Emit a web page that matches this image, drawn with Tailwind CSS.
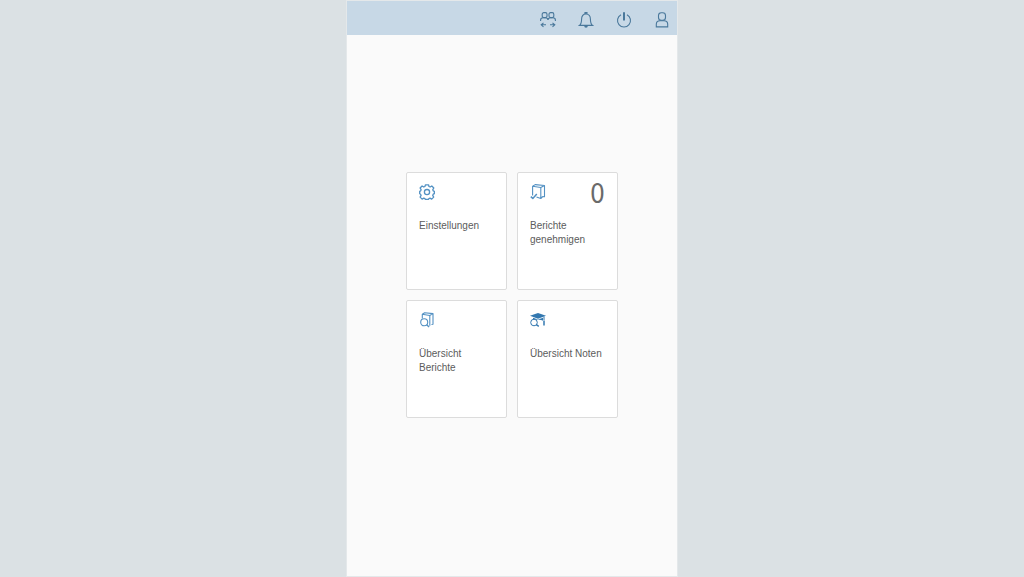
<!DOCTYPE html>
<html lang="de">
<head>
<meta charset="utf-8">
<meta name="viewport" content="width=device-width, initial-scale=1">
<title>Startseite</title>
<script src="https://cdn.jsdelivr.net/npm/@tailwindcss/browser@4"></script>
</head>
<body class="min-h-screen bg-[#dbe1e4] font-['Liberation_Sans',Arial,sans-serif] text-[#5c5c5c]">
<div class="mx-auto flex min-h-screen max-w-[332px] flex-col border border-[#e4e8ea] bg-[#fafafa]">
  <header class="flex h-[34px] items-center justify-end gap-[18px] bg-[#c7d8e6] px-[5px] pt-1 text-[#4a789b]">
    <button type="button" aria-label="Benutzer wechseln" class="grid size-5 place-items-center">
      <svg class="size-4" viewBox="0 0 16 16" fill="none" stroke="currentColor" stroke-width="1.1">
        <rect x="2.2" y=".6" width="4.8" height="5" rx="1.6"/><rect x="9" y=".6" width="4.8" height="5" rx="1.6"/>
        <path d="M.6 9V8c0-1.400 1.200-2.200 2.500-2.200h2.400C7 5.800 7.900 6.800 8 8c.1-1.200 1-2.200 2.500-2.200h2.400c1.300 0 2.500.8 2.500 2.200v1M1.200 12.800H6M3.500 10.800 1.200 12.800l2.300 2M10 12.800h4.800M12.500 10.800l2.300 2-2.300 2"/>
      </svg>
    </button>
    <button type="button" aria-label="Benachrichtigungen" class="grid size-5 place-items-center">
      <svg class="size-4" viewBox="0 0 16 16" fill="none" stroke="currentColor" stroke-width="1.1">
        <path d="M7 2V.6h2V2M1.500 13.400h13c-1.800-1.400-2.100-3.400-2.100-6.300C12.400 4 10.700 2 8 2S3.600 4 3.600 7.100c0 2.900-.3 4.900-2.100 6.300Z"/>
        <path d="M6.200 13.700h3.600a1.800 2 0 0 1-3.600 0Z" fill="currentColor" stroke="none"/>
      </svg>
    </button>
    <button type="button" aria-label="Abmelden" class="grid size-5 place-items-center">
      <svg class="size-4" viewBox="0 0 16 16" fill="none" stroke="currentColor" stroke-width="1.1">
        <path d="M5 2.700a6.500 6.500 0 1 0 6 0"/><path d="M8 .3v8.200" stroke-width="2"/>
      </svg>
    </button>
    <button type="button" aria-label="Profil" class="grid size-5 place-items-center">
      <svg class="size-4" viewBox="0 0 16 16" fill="none" stroke="currentColor" stroke-width="1.1">
        <rect x="4.500" y=".8" width="7" height="7.400" rx="2.800"/><path d="M2.300 14.900v-2.700C2.300 9.900 3.900 8.700 6 8.700h4c2.100 0 3.700 1.200 3.700 3.500v2.700Z"/>
      </svg>
    </button>
  </header>
  <main class="flex flex-1 items-center justify-center pb-[22px]">
    <nav aria-label="Kacheln" class="grid grid-cols-[101px_101px] auto-rows-[118px] gap-2.5 text-[10px] leading-[14px]">
      <a href="#einstellungen" class="flex flex-col gap-[18px] rounded-xs border border-[#dcdcdc] bg-white px-3 py-2.5">
        <svg class="my-px size-4 text-[#5391c3]" viewBox="0 0 16 16" fill="none" stroke="currentColor" stroke-width="1.300" stroke-linejoin="round">
          <path d="M6.500.8h3l.5 1.700 1.100.5 1.700-1 2 2-1 1.700.4 1.100 1.200.5v2.400l-1.200.5-.5 1.200 1 1.700-2 2-1.700-1-1.100.5-.5.900h-3l-.5-.9-1.100-.5-1.700 1-2-2 1-1.700-.5-1.200-.9-.5V7.300l1-.5.4-1.100-1-1.700 2-2 1.700 1 1.100-.5Z"/><circle cx="8" cy="8.100" r="2.600"/>
        </svg>
        <span>Einstellungen</span>
      </a>
      <a href="#genehmigen" class="flex flex-col gap-[18px] rounded-xs border border-[#dcdcdc] bg-white px-3 py-2.5">
        <span class="flex h-[18px] items-center justify-between">
          <svg class="size-4 text-[#5391c3]" viewBox="0 0 16 16" fill="none" stroke="currentColor" stroke-width="1.100" stroke-linejoin="round">
            <path d="M2.600 11.500V2.200l8.200 1.300v11L6.500 13M2.600 2.200 5.200.6l9.300.9v11.300l-1.800-.3M10.800 3.500l3.700-2M10.800 14.500l1.900-2"/><path d="m.8 12.600 2 1.800 4-4.300" stroke-width="1.500"/>
          </svg>
          <span class="pt-1 font-['Liberation_Sans_Narrow','DejaVu_Sans_Condensed',sans-serif] text-[26px] leading-5 text-[#6a6a6a]">0</span>
        </span>
        <span>Berichte genehmigen</span>
      </a>
      <a href="#berichte" class="flex flex-col gap-[18px] rounded-xs border border-[#dcdcdc] bg-white px-3 py-2.5">
        <svg class="my-px size-4 text-[#5391c3]" viewBox="0 0 16 16" fill="none" stroke="currentColor" stroke-width="1.100" stroke-linejoin="round">
          <path d="M3.300 6.500V2.300l7.500 1.200v10.300M3.300 2.300 5.700.7l8.300.9v10.600l-1.500.3M10.800 3.500 14 1.600"/><circle cx="5.200" cy="10.300" r="3.500"/><path d="m7.700 12.700 2.400 2.300" stroke-width="1.400"/>
        </svg>
        <span>Übersicht Berichte</span>
      </a>
      <a href="#noten" class="flex flex-col gap-[18px] rounded-xs border border-[#dcdcdc] bg-white px-3 py-2.5">
        <svg class="my-px size-4 text-[#3378b0]" viewBox="0 0 16 16" fill="none" stroke="currentColor" stroke-width="1">
          <path d="M0 3.800 8 1l8 2.800-8 2.900Z" fill="currentColor" stroke="none"/><path d="M3 5.700 8 7.500l5-1.800v3c-2.500-1.200-7.500-1.200-10 0Z" fill="currentColor" stroke="none"/>
          <path d="M14 4.500v4"/><path d="M14 8.800v4.800" stroke-width="1.500"/><circle cx="4" cy="10.500" r="3.300" fill="white"/><path d="m6.300 12.600 2.500 1.800" stroke-width="1.300"/>
        </svg>
        <span>Übersicht Noten</span>
      </a>
    </nav>
  </main>
</div>
</body>
</html>
